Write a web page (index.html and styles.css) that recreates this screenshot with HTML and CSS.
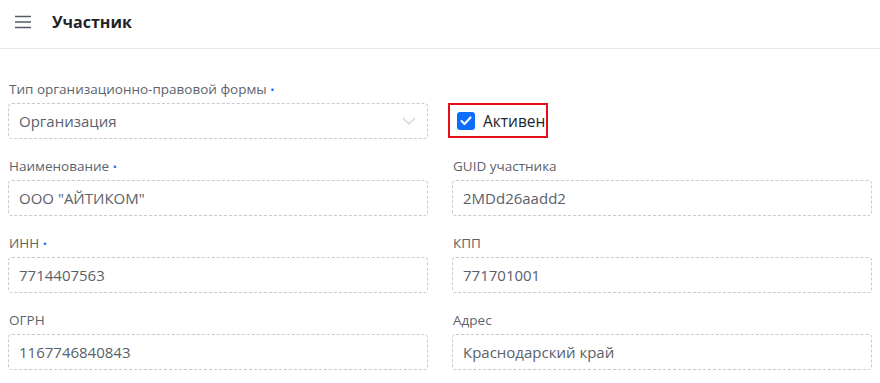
FILE: index.html
```html
<!DOCTYPE html>
<html lang="ru">
<head>
    <meta charset="UTF-8">
    <title>Участник</title>
    <link rel="stylesheet" href="styles.css">
</head>
<body>
    <header class="topbar">
        <button class="menu-btn" aria-label="Меню">
            <svg width="18" height="14" viewBox="0 0 18 14"><path d="M1 1.5h16M1 7h16M1 12.5h16" stroke="#555b66" stroke-width="1.6" fill="none"/></svg>
        </button>
        <h1 class="page-title">Участник</h1>
    </header>
    <main class="form-grid">
        <div class="field">
            <label class="field-label">Тип организационно-правовой формы <span class="req">•</span></label>
            <div class="input select">
                <span>Организация</span>
                <svg width="14" height="8" viewBox="0 0 14 8"><path d="M1 1l6 6 6-6" stroke="#d3d6dc" stroke-width="1.4" fill="none"/></svg>
            </div>
        </div>
        <div class="field check-field">
            <label class="check-box">
                <span class="check">
                    <svg width="12" height="10" viewBox="0 0 12 10"><path d="M1.5 5l3 3 6-6.5" stroke="#fff" stroke-width="2" fill="none" stroke-linecap="round" stroke-linejoin="round"/></svg>
                </span>
                Активен
            </label>
        </div>
        <div class="field">
            <label class="field-label">Наименование <span class="req">•</span></label>
            <div class="input">ООО "АЙТИКОМ"</div>
        </div>
        <div class="field">
            <label class="field-label">GUID участника</label>
            <div class="input">2MDd26aadd2</div>
        </div>
        <div class="field">
            <label class="field-label">ИНН <span class="req">•</span></label>
            <div class="input">7714407563</div>
        </div>
        <div class="field">
            <label class="field-label">КПП</label>
            <div class="input">771701001</div>
        </div>
        <div class="field">
            <label class="field-label">ОГРН</label>
            <div class="input">1167746840843</div>
        </div>
        <div class="field">
            <label class="field-label">Адрес</label>
            <div class="input">Краснодарский край</div>
        </div>
    </main>
</body>
</html>
```
FILE: styles.css
```css
body {
    font-family: 'Open Sans', 'Noto Sans', sans-serif;
    background-color: #ffffff;
    color: #212529;
    margin: 0;
    padding: 0;
}
.topbar {
    display: flex;
    align-items: center;
    height: 49px;
    border-bottom: 1px solid #e6e7ea;
    padding: 0 12px 5px;
    box-sizing: border-box;
}
.menu-btn {
    background: none;
    border: none;
    padding: 0;
    margin: 0 20px 0 2px;
    display: flex;
    cursor: pointer;
}
.page-title {
    margin: 0;
    font-size: 16px;
    font-weight: 700;
    color: #1f2329;
}
.form-grid {
    display: grid;
    grid-template-columns: 420px 420px;
    column-gap: 24px;
    row-gap: 18px;
    padding: 31px 8px 0;
}
.field {
    display: flex;
    flex-direction: column;
}
.field-label {
    font-size: 13.5px;
    color: #5d636c;
    height: 18px;
    line-height: 18px;
    margin: 0 0 5px 1px;
}
.req {
    color: #0d6efd;
    font-size: 11px;
}
.input {
    height: 36px;
    box-sizing: border-box;
    border: 1px dashed #c6cbd3;
    border-radius: 4px;
    padding: 0 10px;
    display: flex;
    align-items: center;
    font-size: 15px;
    color: #5a616b;
}
.select {
    justify-content: space-between;
}
.select svg {
    margin-right: 1px;
}
.check-field {
    justify-content: flex-end;
}
.check-box {
    display: flex;
    align-items: center;
    gap: 8px;
    width: 100px;
    height: 35px;
    box-sizing: border-box;
    border: 2px solid #e3101c;
    padding: 0 7px;
    margin-left: -4px;
    margin-bottom: 1px;
    font-size: 15.5px;
    color: #22262c;
}
.check {
    flex-shrink: 0;
    width: 18px;
    height: 18px;
    border-radius: 3px;
    background-color: #0d6efd;
    display: flex;
    align-items: center;
    justify-content: center;
}
```
